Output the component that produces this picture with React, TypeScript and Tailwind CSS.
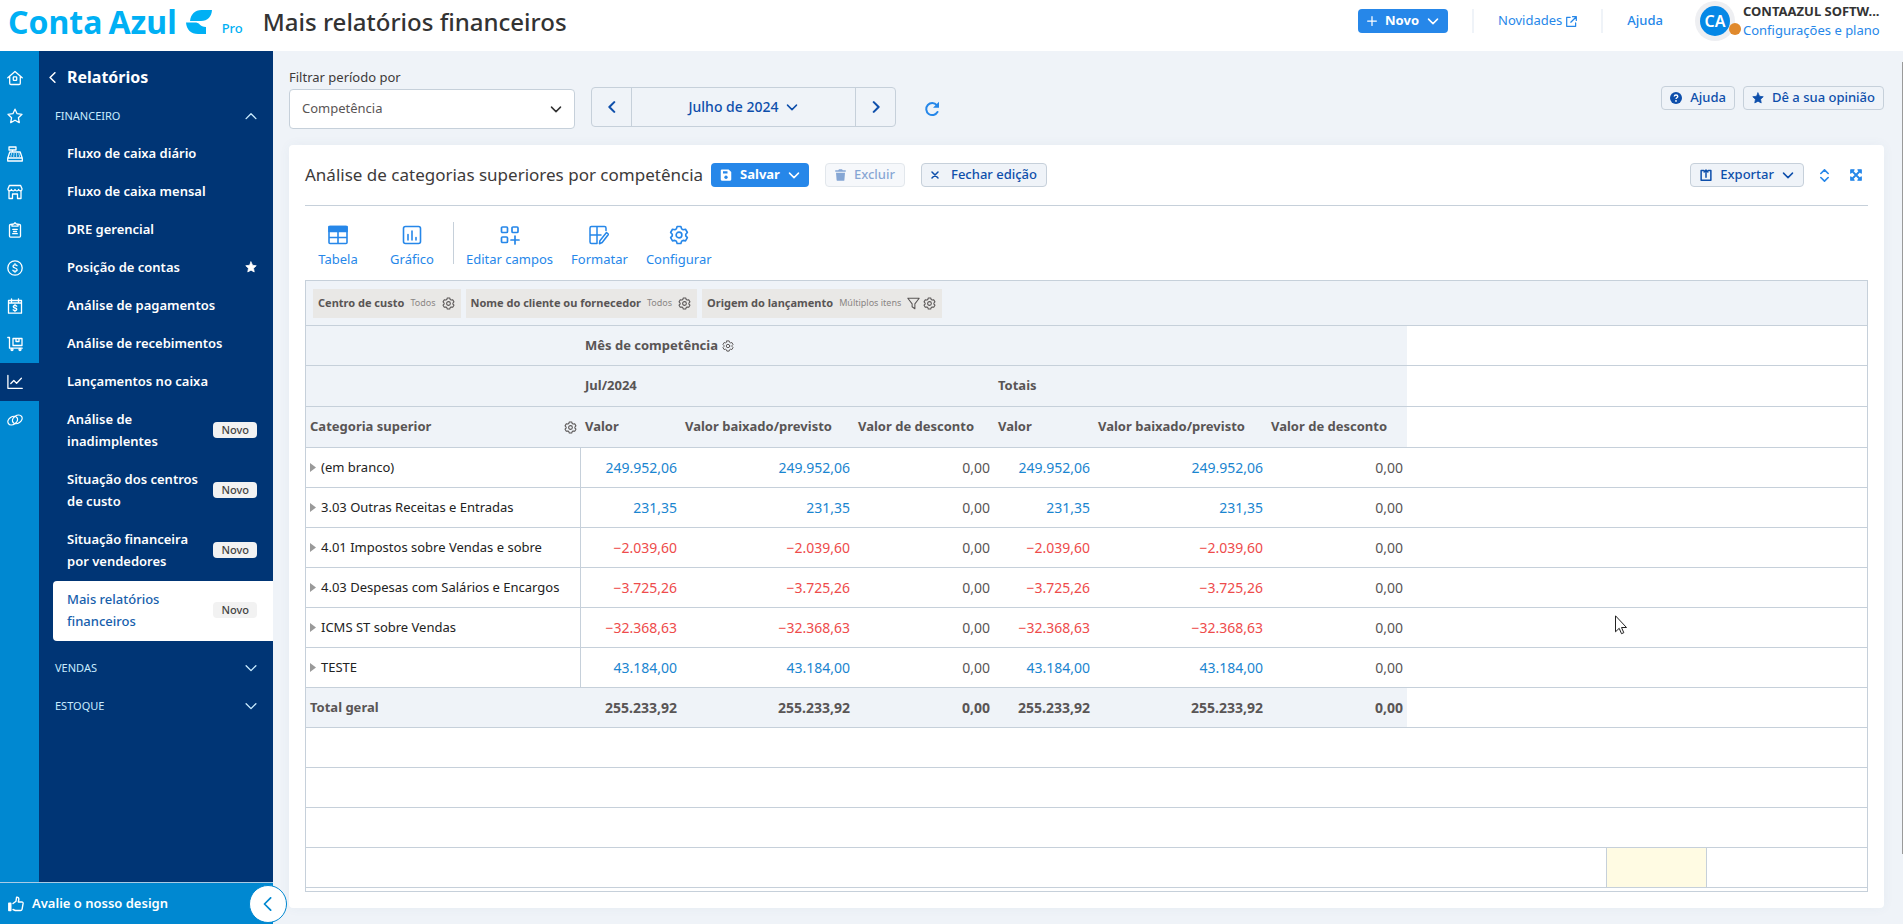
import React from 'react';

type IconProps = { className?: string };

function Svg({ className = 'size-4', children, box = '0 0 16 16', width = 1.3 }: { className?: string; children: React.ReactNode; box?: string; width?: number }) {
  return (
    <svg className={`shrink-0 ${className}`} viewBox={box} fill="none" stroke="currentColor" strokeWidth={width} strokeLinecap="round" strokeLinejoin="round" aria-hidden="true">
      {children}
    </svg>
  );
}

const STAR = 'M8 1.2l2.1 4.5 4.9.6-3.6 3.4.9 4.9L8 12.2l-4.3 2.4.9-4.9L1 6.3l4.9-.6z';
const GEAR =
  'M6.5 1.2h3l.6 1.9 1.2.7 1.9-.4 1.5 2.6-1.3 1.4v1.3l1.3 1.4-1.5 2.6-1.9-.4-1.2.7-.6 1.8h-3l-.6-1.8-1.2-.7-1.9.4-1.5-2.6 1.3-1.4V7.4L1.3 6l1.5-2.6 1.9.4 1.2-.7z';

const Chevron = ({ className = 'size-3', d = 'M2 5.500l6 6 6-6', width = 2 }: { className?: string; d?: string; width?: number }) => (
  <Svg className={className} width={width}><path d={d} /></Svg>
);
const Gear = ({ className = 'size-[13px]', width = 1.3 }: { className?: string; width?: number }) => (
  <Svg className={className} width={width}><path d={GEAR} /><circle cx="8" cy="8" r="2.3" /></Svg>
);
const Star = ({ className = 'size-3' }: IconProps) => (
  <Svg className={className} width={1}><path d={STAR} fill="currentColor" /></Svg>
);

const railIcons: { name: string; icon: React.ReactNode }[] = [
  { name: 'Início', icon: <><path d="M.8 7.8L8 1.4l7.2 6.4M2.7 6.6v6.6c0 .8.5 1.3 1.3 1.3h8c.8 0 1.3-.5 1.3-1.3V6.6" /><rect x="6.3" y="6.9" width="3.4" height="3.4" rx=".6" /></> },
  { name: 'Favoritos', icon: <path d={STAR} /> },
  { name: 'Vendas', icon: <><path d="M2 1h7v3H2zM5.5 4v2M2.800 6h10.400l2 6H.8zM.7 12h14.600v3H.7z" /><path d="M4.500 8h.01M7 8h.01M9.500 8h.01M12 8h.01M4 10h.01M6.800 10h.01M9.600 10h.01M12.400 10h.01" /></> },
  { name: 'Compras', icon: <><path d="M2.400 1.500h11.200l1.500 3.600c0 1-.8 1.700-1.800 1.700s-1.700-.7-1.700-1.500c0 .8-.8 1.500-1.800 1.500S8 6.100 8 5.300c0 .8-.8 1.500-1.800 1.500s-1.800-.7-1.800-1.500c0 .8-.7 1.500-1.700 1.500S.9 6.100.9 5.100z" /><path d="M2 7v7.500h3.500V10h5v4.500H14V7" /></> },
  { name: 'Contratos', icon: <><path d="M5 2.500H3.500c-.6 0-1 .4-1 1v10.600c0 .6.4 1 1 1h9c.6 0 1-.4 1-1V3.500c0-.6-.4-1-1-1H11" /><path d="M5 2.200h1.500L8 .8l1.500 1.400H11v2H5zM5.700 7.300h4.600M6.500 9.500h3M5.700 11.700h4.600" /></> },
  { name: 'Financeiro', icon: <><circle cx="8" cy="8" r="7.200" /><path d="M10 5.700c-.4-.6-1.100-.9-2-.9-1.200 0-2 .6-2 1.500 0 2.200 4.100 1.200 4.100 3.400 0 .9-.9 1.500-2.100 1.500-.9 0-1.700-.3-2.100-.9M8 3.700v1.100M8 11.200v1.100" /></> },
  { name: 'Pagamentos', icon: <><path d="M1.500 2.500h13v12.700h-13zM1.500 5h13M4.500.8v3M11.500.8v3" /><path d="M9.700 8.200c-.4-.5-1-.7-1.700-.7-1 0-1.700.4-1.700 1.200 0 1.700 3.500.9 3.500 2.600 0 .8-.8 1.200-1.800 1.200-.8 0-1.400-.2-1.800-.7M8 6.600v.9M8 12.500v.9" /></> },
  { name: 'Estoque', icon: <><path d="M.8 1.500h1.700v10.700h12.700M6 2.500h9v7H6zM9 2.500v3h3v-3" /><circle cx="5" cy="13.500" r="1" /><circle cx="13" cy="13.500" r="1" /></> },
  { name: 'Relatórios', icon: <path d="M.9 1.500v12.800h14.400M3.800 9.500l3-3 2.800 2.700 4.800-4.900" /> },
  { name: 'Integrações', icon: <><ellipse cx="5.700" cy="8.600" rx="5.200" ry="3.800" transform="rotate(-35 5.700 8.600)" /><ellipse cx="10.300" cy="7.400" rx="5.200" ry="3.800" transform="rotate(-35 10.300 7.400)" /></> },
];

const navItems: { label: string; star?: boolean; isNew?: boolean; active?: boolean }[] = [
  { label: 'Fluxo de caixa diário' },
  { label: 'Fluxo de caixa mensal' },
  { label: 'DRE gerencial' },
  { label: 'Posição de contas', star: true },
  { label: 'Análise de pagamentos' },
  { label: 'Análise de recebimentos' },
  { label: 'Lançamentos no caixa' },
  { label: 'Análise de inadimplentes', isNew: true },
  { label: 'Situação dos centros de custo', isNew: true },
  { label: 'Situação financeira por vendedores', isNew: true },
  { label: 'Mais relatórios financeiros', isNew: true, active: true },
];

const rows = [
  { name: '(em branco)', value: '249.952,06' },
  { name: '3.03 Outras Receitas e Entradas', value: '231,35' },
  { name: '4.01 Impostos sobre Vendas e sobre', value: '-2.039,60' },
  { name: '4.03 Despesas com Salários e Encargos', value: '-3.725,26' },
  { name: 'ICMS ST sobre Vendas', value: '-32.368,63' },
  { name: 'TESTE', value: '43.184,00' },
];

const filters = [
  { label: 'Centro de custo', value: 'Todos' },
  { label: 'Nome do cliente ou fornecedor', value: 'Todos' },
  { label: 'Origem do lançamento', value: 'Múltiplos itens', filtered: true },
];

const outlineBtn = 'flex h-6 items-center gap-2 rounded border border-[#c6d0da] bg-[#eff3f8] text-[13px] font-medium whitespace-nowrap text-[#0e4fab]';
const toolBtn = 'flex flex-col items-center gap-1 px-[9px] text-[13px] leading-5 whitespace-nowrap text-[#2687e9]';

function Header() {
  return (
    <header className="flex h-[51px] items-center bg-white pr-[19px] pl-2">
      <a href="#inicio" className="mb-2 flex items-center text-[#00b0f4]">
        <span className="flex gap-[6px] text-[32px] leading-9 font-bold"><span>Conta</span><span>Azul</span></span>
        <svg className="ml-[9px] h-6 w-[26px]" viewBox="0 0 26 24" fill="currentColor" aria-hidden="true">
          <path d="M4 11C4.500 4.500 9 0 15.500 0H26c-.3 6.500-4.500 11-11 11z" />
          <path d="M0 12.500h8.500c2.600 0 4 .5 5.200 2 1.400 1.600 3.300 2.400 6.300 2.500V24h-8C5 24 .5 19.500 0 12.500z" />
        </svg>
        <span className="mt-3 ml-[10px] text-[13px] leading-4 font-medium">Pro</span>
      </a>
      <h1 className="mb-2 ml-5 text-2xl font-medium text-[#333]">Mais relatórios financeiros</h1>
      <div className="mb-[9px] ml-auto flex items-center gap-6">
        <button className="flex h-6 items-center gap-2 rounded bg-[#2687e9] px-[9px] text-[13px] font-bold text-white">
          <Svg className="size-[10px]" width={2}><path d="M8 1v14M1 8h14" /></Svg>
          Novo
          <Chevron />
        </button>
        <span className="h-6 w-[2px] bg-[#eff3f8]" />
        <a href="#novidades" className="flex items-center gap-1 text-[13px] text-[#2687e9]">
          Novidades
          <Svg className="size-[11px]" width={1.8}><path d="M6 2H1v13h13v-5M9.500 1H15v5.500M15 1L7 9" /></Svg>
        </a>
        <span className="h-6 w-[2px] bg-[#eff3f8]" />
        <a href="#ajuda" className="text-[13px] font-medium text-[#2687e9]">Ajuda</a>
        <div className="ml-2 flex items-center gap-2">
          <div className="relative flex size-10 items-center justify-center rounded-full bg-[#eeeff2]">
            <span className="flex size-[30px] items-center justify-center rounded-full bg-[#0588e6] text-base font-semibold text-white">CA</span>
            <span className="absolute -right-[6px] bottom-[6px] size-3 rounded-full bg-[#e0892c]" />
          </div>
          <div className="flex w-[141px] flex-col text-[13px] leading-[19px]">
            <strong className="font-bold whitespace-nowrap text-[#333]">CONTAAZUL SOFTW...</strong>
            <a href="#plano" className="whitespace-nowrap text-[#2687e9]">Configurações e plano</a>
          </div>
        </div>
      </div>
    </header>
  );
}

function Sidebar() {
  return (
    <aside className="flex w-[273px] shrink-0 flex-col">
      <div className="flex flex-1">
        <nav aria-label="Módulos" className="flex w-[39px] flex-col bg-[#0088d1] pt-2 text-white">
          {railIcons.map((item) => (
            <a key={item.name} href="#modulo" aria-label={item.name} className={item.name === 'Relatórios' ? 'flex h-[38px] items-center bg-[#003575] pl-[7px]' : 'flex h-[38px] items-center pl-[7px]'}>
              <Svg>{item.icon}</Svg>
            </a>
          ))}
        </nav>
        <nav aria-label="Relatórios" className="flex flex-1 flex-col bg-[#003575] pt-2 text-white">
          <button className="flex h-9 items-center gap-[9px] pl-2 text-base font-bold">
            <Chevron className="size-[11px]" d="M11.500 1L4.500 8l7 7" width={2.200} />
            Relatórios
          </button>
          <button className="mt-[2px] flex h-[38px] items-center justify-between px-4 text-[11px] text-[#c9ecff]">
            FINANCEIRO
            <Chevron d="M1.500 11.500L8 5l6.500 6.500" width={1.8} />
          </button>
          {navItems.map((item) => (
            <a
              key={item.label}
              href="#relatorio"
              className={
                item.active
                  ? 'ml-[14px] flex items-center gap-2 rounded-l bg-white pt-[7px] pr-4 pb-[9px] pl-[14px] text-[13px] leading-[22px] font-medium text-[#1660ac]'
                  : 'ml-[14px] flex items-center gap-2 pt-[7px] pr-4 pb-[9px] pl-[14px] text-[13px] leading-[22px] font-semibold'
              }
            >
              <span className="flex-1">{item.label}</span>
              {item.star && <Star className="size-3" />}
              {item.isNew && <span className="rounded bg-[#f2f2f2] px-2 text-[11px] leading-4 font-medium text-[#444]">Novo</span>}
            </a>
          ))}
          <div className="mt-2 flex flex-col text-[11px] text-[#c9ecff]">
            {['VENDAS', 'ESTOQUE'].map((s) => (
              <button key={s} className="flex h-[38px] items-center justify-between px-4">
                {s}
                <Chevron width={1.8} d="M1.500 5L8 11.500 14.500 5" />
              </button>
            ))}
          </div>
        </nav>
      </div>
      <div className="relative flex h-[42px] items-center border-t border-[#a9cbe6] bg-[#0088d1] text-white">
        <a href="#avaliar" className="flex items-center gap-2 pl-2 text-[13px] font-semibold">
          <Svg width={1.4}><path d="M.8 7.300h2v7.200h-2z" fill="currentColor" /><path d="M5 7.500l3-2.300.6-4c1.500-.2 2.400.8 2.200 2.300L10.300 6h3.500c.9 0 1.400.6 1.300 1.400l-1 5.700c-.2.900-.8 1.400-1.600 1.400H7.300L5 13.500" /></Svg>
          Avalie o nosso design
        </a>
        <button aria-label="Recolher menu" className="absolute -right-[14px] flex size-[38px] items-center justify-center rounded-full border border-[#0088d1] bg-white text-[#0088d1]">
          <Chevron className="size-[14px]" d="M11 1L4 8l7 7" width={2} />
        </button>
      </div>
    </aside>
  );
}

function FilterBar() {
  return (
    <div className="flex items-start gap-4">
      <div className="flex w-[286px] flex-col gap-[2px]">
        <label htmlFor="periodo" className="text-[13px] leading-5 text-[#3d3a3a]">Filtrar período por</label>
        <div className="relative">
          <select id="periodo" className="h-10 w-full appearance-none rounded border border-[#c6d0da] bg-white px-3 text-[13px] text-[#595555]">
            <option>Competência</option>
          </select>
          <Chevron className="pointer-events-none absolute top-[14px] right-[13px] size-3 text-[#333]" />
        </div>
      </div>
      <div className="mt-5 flex h-10 w-[305px] rounded border border-[#c6d0da] text-[#0e4fab]">
        <button aria-label="Mês anterior" className="flex w-[39px] items-center justify-center"><Chevron d="M11 1.500L4.500 8l6.500 6.500" width={2.800} /></button>
        <button className="flex flex-1 items-center justify-center gap-2 border-x border-[#c6d0da] text-sm font-medium">
          Julho de 2024
          <Chevron />
        </button>
        <button aria-label="Próximo mês" className="flex w-[39px] items-center justify-center"><Chevron d="M5 1.500L11.500 8 5 14.500" width={2.800} /></button>
      </div>
      <button aria-label="Atualizar" className="mt-[22px] flex size-10 items-center justify-center text-[#2687e9]">
        <Svg className="size-4" width={2}><path d="M12.800 4.200A6 6 0 1 0 13.500 11" /><path d="M15 .8v6H9z" fill="currentColor" stroke="none" /></Svg>
      </button>
      <div className="mt-[19px] ml-auto flex gap-2">
        <button className={`${outlineBtn} px-2`}>
          <svg className="size-3" viewBox="0 0 16 16" aria-hidden="true"><circle cx="8" cy="8" r="8" fill="currentColor" /><path d="M5.600 6.100C5.700 4.700 6.700 4 8 4s2.400.7 2.400 2c0 1.700-2.300 1.700-2.300 3.300" fill="none" stroke="#fff" strokeWidth="1.800" /><circle cx="8" cy="11.900" r="1.200" fill="#fff" /></svg>
          Ajuda
        </button>
        <button className={`${outlineBtn} px-2`}>
          <Star className="size-3" />
          Dê a sua opinião
        </button>
      </div>
    </div>
  );
}

function Toolbar() {
  return (
    <div className="flex h-[74px] items-center">
      <div className="flex gap-[10px] pt-2 pl-px">
        <button className={`w-16 ${toolBtn}`}>
          <Svg className="size-5" box="0 0 20 20" width={1.6}><path d="M2 1.500h16c.5 0 1 .5 1 1v15c0 .5-.5 1-1 1H2c-.5 0-1-.5-1-1v-15c0-.5.5-1 1-1zM1 12.500h18M10 6v12" /><path d="M1 1.500h18v5H1z" fill="currentColor" /></Svg>
          Tabela
        </button>
        <button className={`w-16 ${toolBtn}`}>
          <Svg className="size-5" box="0 0 20 20" width={1.6}><rect x="1.500" y="1.500" width="17" height="17" rx="2" /><path d="M6 9.500V15M10 6v9M14 12.500V15" /></Svg>
          Gráfico
        </button>
      </div>
      <span className="ml-[9px] h-[42px] w-px bg-[#c6d0da]" />
      <div className="ml-[3px] flex pt-2">
        <button className={toolBtn}>
          <Svg className="size-5" box="0 0 20 20" width={1.700}><rect x="1.500" y="2" width="6" height="5.500" rx="1" /><rect x="12" y="2" width="6" height="5.500" rx="1" /><rect x="1.500" y="12" width="6" height="5.500" rx="1" /><path d="M15 11v8M11 15h8" /></Svg>
          Editar campos
        </button>
        <button className={toolBtn}>
          <Svg className="size-5" box="0 0 20 20" width={1.500}><path d="M17 5.500V3c0-1-.5-1.500-1.500-1.500H2.500c-1 0-1.500.5-1.500 1.500v14c0 1 .5 1.500 1.500 1.500H8V1.500M1 10h11" /><path d="M17.500 7.500l2 1.800-6.300 8.200-2.700 1.200.4-3z" /></Svg>
          Formatar
        </button>
        <button className={toolBtn}>
          <Gear className="size-5" width={1.300} />
          Configurar
        </button>
      </div>
    </div>
  );
}

function ReportTable() {
  const blanks = (n: number) => Array.from({ length: n }, (_, i) => <td key={`b${i}`} className="border-b border-[#c6d0da]" />);
  const head = 'border-b border-[#c6d0da] bg-[#eff3f8] px-1 text-left font-bold whitespace-nowrap';
  const num = 'border-b border-[#c6d0da] px-1 text-right text-[14px]';
  return (
    <table className="w-full table-fixed border-separate border-spacing-0 text-[13px] text-[#595555]">
      <colgroup>
        <col className="w-[275px]" />
        <col className="w-[100px]" />
        <col className="w-[173px]" />
        <col className="w-[140px]" />
        <col className="w-[100px]" />
        <col className="w-[173px]" />
        <col className="w-[140px]" />
        <col className="w-[100px]" />
        <col className="w-[100px]" />
        <col className="w-[100px]" />
        <col />
      </colgroup>
      <thead>
        <tr className="h-10">
          <td className={head} />
          <th colSpan={6} className={head}>
            <span className="flex items-center gap-1">Mês de competência <Gear className="size-3" /></span>
          </th>
          {blanks(4)}
        </tr>
        <tr className="h-[41px]">
          <td className={head} />
          <th colSpan={3} className={head}>Jul/2024</th>
          <th colSpan={3} className={head}>Totais</th>
          {blanks(4)}
        </tr>
        <tr className="h-[41px]">
          <th className={head}>
            <span className="flex items-center justify-between">Categoria superior <Gear /></span>
          </th>
          {[0, 1].map((g) => (
            <React.Fragment key={g}>
              <th className={head}>Valor</th>
              <th className={head}>Valor baixado/previsto</th>
              <th className={head}>Valor de desconto</th>
            </React.Fragment>
          ))}
          {blanks(4)}
        </tr>
      </thead>
      <tbody>
        {rows.map((row) => {
          const tone = row.value.startsWith('-') ? 'text-[#ee4b4b]' : 'text-[#1a85d0]';
          return (
            <tr key={row.name} className="h-10">
              <th className="border-r border-b border-[#c6d0da] px-1 text-left font-normal whitespace-nowrap text-[#222]">
                <span className="flex items-center gap-[5px]">
                  <svg className="h-[9px] w-[6px] text-[#999]" viewBox="0 0 6 9" fill="currentColor" aria-hidden="true"><path d="M0 0l6 4.500L0 9z" /></svg>
                  {row.name}
                </span>
              </th>
              {[0, 1].map((g) => (
                <React.Fragment key={g}>
                  <td className={`${num} ${tone}`}>{row.value.replace('-', '−')}</td>
                  <td className={`${num} ${tone}`}>{row.value.replace('-', '−')}</td>
                  <td className={num}>0,00</td>
                </React.Fragment>
              ))}
              {blanks(4)}
            </tr>
          );
        })}
        <tr className="h-10">
          <th className={head}>Total geral</th>
          {['255.233,92', '255.233,92', '0,00', '255.233,92', '255.233,92', '0,00'].map((v, i) => (
            <td key={i} className={`${num} bg-[#eff3f8] font-bold`}>{v}</td>
          ))}
          {blanks(4)}
        </tr>
        {[0, 1, 2].map((r) => (
          <tr key={r} className="h-10">{blanks(11)}</tr>
        ))}
        <tr className="h-10">
          {blanks(8)}
          <td className="border-r border-b border-[#c6d0da]" />
          <td className="border-r border-b border-[#c6d0da] bg-[#fffbe3]" />
          {blanks(1)}
        </tr>
      </tbody>
    </table>
  );
}

export default function App() {
  return (
    <div className="relative flex min-h-screen flex-col bg-[#eff3f8] font-['Noto_Sans',sans-serif]">
      <Header />
      <div className="flex flex-1">
        <Sidebar />
        <main className="flex min-w-0 flex-1 flex-col gap-4 py-4 pr-[19px] pl-4">
          <FilterBar />
          <section className="relative flex-1 rounded bg-white px-4 pb-4 shadow-[0_0_12px_rgba(60,90,130,0.05)]">
            <div className="flex h-[61px] items-center border-b border-[#c6d0da]">
              <h2 className="mr-2 text-[17px] whitespace-nowrap text-[#3d3a3a]">Análise de categorias superiores por competência</h2>
              <div className="flex items-center gap-4">
                <button className="flex h-6 items-center gap-2 rounded bg-[#2687e9] px-[9px] text-[13px] font-bold text-white">
                  <svg className="size-3" viewBox="0 0 16 16" aria-hidden="true"><path d="M2.500.5h9L15 4v10a1.500 1.500 0 0 1-1.500 1.500h-11A1.500 1.500 0 0 1 1 14V2A1.500 1.500 0 0 1 2.500.5z" fill="currentColor" /><path d="M4 3h6v3H4z" fill="#2687e9" /><circle cx="8" cy="11" r="2.200" fill="#2687e9" /></svg>
                  Salvar
                  <Chevron />
                </button>
                <button className={`${outlineBtn} px-[9px] opacity-50`} disabled>
                  <svg className="h-3 w-[11px]" viewBox="0 0 14 16" fill="currentColor" aria-hidden="true"><path d="M0 1.500h4L5 .3h4l1 1.200h4v2H0zM1 5h12l-.8 9.500c0 .8-.6 1.300-1.400 1.300H3.200c-.8 0-1.300-.5-1.400-1.300z" /></svg>
                  Excluir
                </button>
                <button className={`${outlineBtn} px-[9px]`}>
                  <Svg className="mr-1 size-2" width={3}><path d="M2 2l12 12M14 2L2 14" /></Svg>
                  Fechar edição
                </button>
              </div>
              <div className="ml-auto flex items-center gap-2">
                <button className={`${outlineBtn} px-[9px]`}>
                  <Svg className="size-3" width={2}><path d="M5 2H1.500v13h13V2H11M8 11V1.500M5.500 4L8 1.500 10.500 4" /></Svg>
                  Exportar
                  <Chevron />
                </button>
                <button aria-label="Recolher" className="flex size-6 items-center justify-center text-[#2687e9]">
                  <Svg className="size-[13px]" width={2}><path d="M3.500 5.500L8 1l4.500 4.500M3.500 10.500L8 15l4.500-4.500" /></Svg>
                </button>
                <button aria-label="Tela cheia" className="flex size-6 items-center justify-center text-[#2687e9]">
                  <Svg className="size-3" width={2.600}><path d="M3 3l10 10M13 3L3 13" /><path d="M1 1h4.500L1 5.500zM15 1h-4.500L15 5.500zM1 15h4.500L1 10.500zM15 15h-4.500l4.500-4.500z" fill="currentColor" strokeWidth="1.600" /></Svg>
                </button>
              </div>
            </div>
            <Toolbar />
            <div className="border border-[#c6d0da] pb-[3px]">
              <div className="flex h-[45px] items-center gap-[5px] border-b border-[#c6d0da] bg-[#eff3f8] px-[7px]">
                {filters.map((f) => (
                  <button key={f.label} className="flex h-[29px] items-center gap-[6px] bg-[#e9e8e6] pr-[6px] pl-[5px] text-[11px] font-bold whitespace-nowrap text-[#595555]">
                    {f.label}
                    <span className="text-[9px] font-normal text-[#8a8684]">{f.value}</span>
                    <span className="flex gap-[3px]">
                      {f.filtered && <Svg className="size-[13px]" width={1.300}><path d="M1 1.500h14l-5.300 7v6L6.300 12V8.500z" /></Svg>}
                      <Gear />
                    </span>
                  </button>
                ))}
              </div>
              <ReportTable />
            </div>
            <svg className="pointer-events-none absolute top-[470px] right-[257px] h-5 w-3" viewBox="0 0 12 20" fill="#fff" stroke="#222" aria-hidden="true"><path d="M.5.800v16l3.700-3.500 2.300 5.400 2.300-1-2.300-5.200h5z" /></svg>
          </section>
        </main>
      </div>
      <span className="absolute top-[62px] right-0 h-[792px] w-px bg-[#9a9a9a]" />
    </div>
  );
}
